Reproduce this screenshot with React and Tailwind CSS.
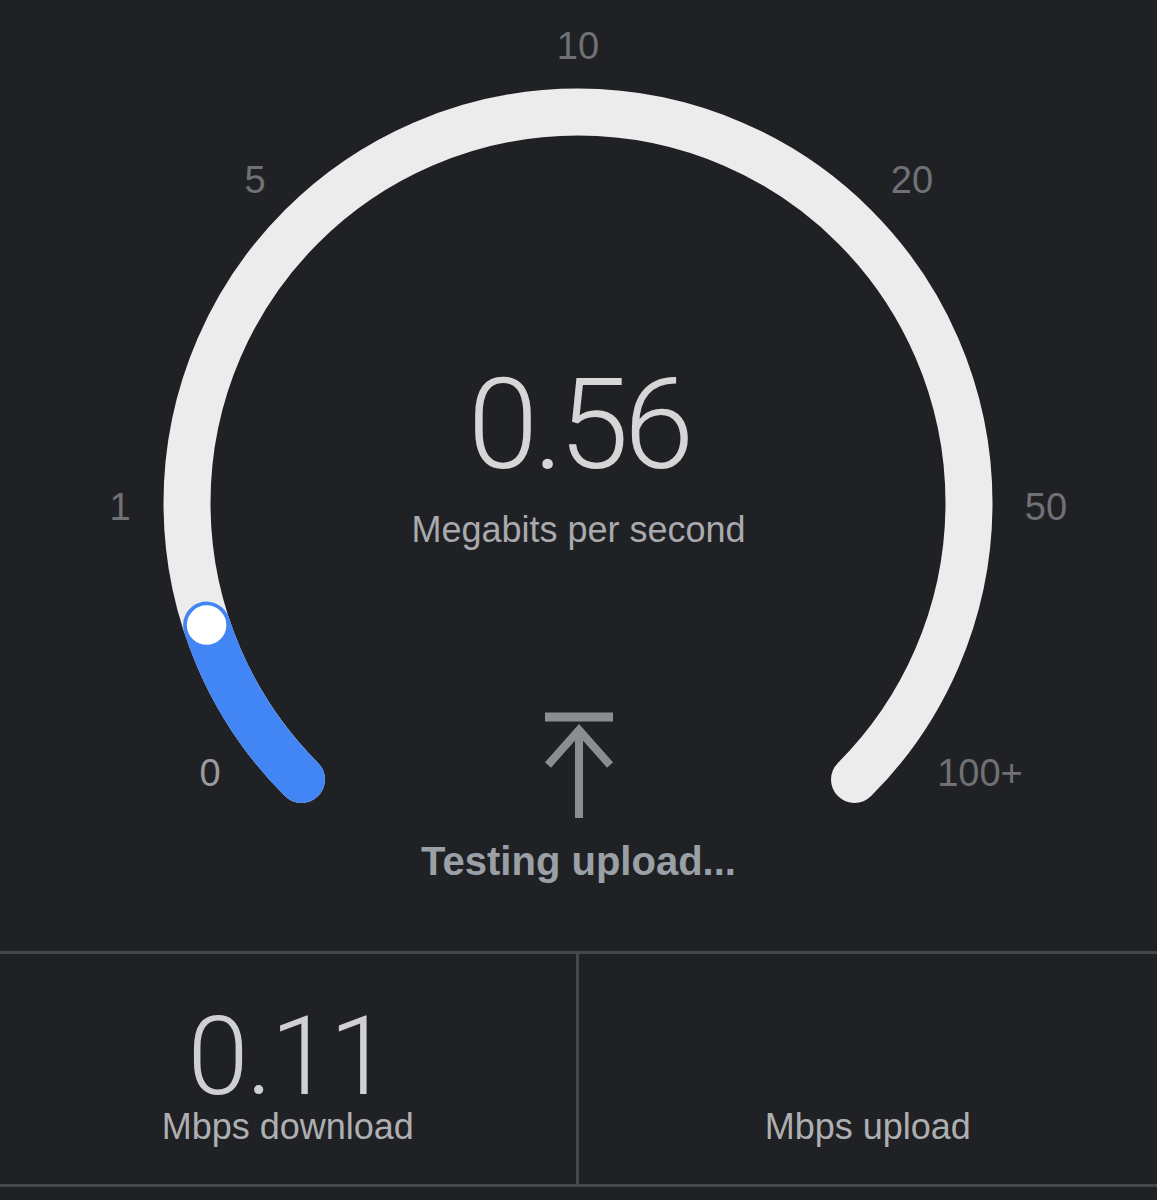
const labels = [
  { t: '0', x: 210, y: 773, c: '#9a9b9e' },
  { t: '1', x: 120, y: 507, c: '#707175' },
  { t: '5', x: 255, y: 180, c: '#707175' },
  { t: '10', x: 578, y: 46, c: '#707175' },
  { t: '20', x: 912, y: 180, c: '#707175' },
  { t: '50', x: 1046, y: 507, c: '#707175' },
  { t: '100+', x: 980, y: 773, c: '#707175' },
]

function Gauge() {
  return (
    <svg className="absolute inset-0" width="1157" height="951" viewBox="0 0 1157 951">
      <path d="M 301.5 779.5 A 391 391 0 1 1 854.5 779.5" fill="none" stroke="#ececec" strokeWidth="47" strokeLinecap="round" />
      <path d="M 301.5 779.5 A 391 391 0 0 1 206.6 625.1" fill="none" stroke="#4285f4" strokeWidth="47" strokeLinecap="round" />
      <circle cx="206.6" cy="625.1" r="21" fill="#ffffff" stroke="#4285f4" strokeWidth="2.5" />
      {labels.map(l => (
        <text key={l.t} x={l.x} y={l.y} fill={l.c} fontSize="38" fontFamily="'Liberation Sans', Arial, sans-serif" textAnchor="middle" dominantBaseline="central">{l.t}</text>
      ))}
    </svg>
  )
}

function UploadIcon() {
  return (
    <svg width="72" height="108" viewBox="0 0 72 108" fill="none" stroke="#8a8d91" strokeWidth="8">
      <path d="M 2 5 H 70" strokeWidth="9" />
      <path d="M 36 16 V 106" />
      <path d="M 5 53 L 36 18 L 67 53" />
    </svg>
  )
}

export default function App() {
  return (
    <div className="w-[1157px] h-[1200px] bg-[#202124] overflow-hidden" style={{ fontFamily: "'Liberation Sans', Arial, sans-serif" }}>
      <div className="relative h-[951px]">
        <Gauge />
        <div className="relative flex flex-col items-center pt-[361px]">
          <p className="text-[127px] leading-none font-light tracking-[-0.04em] text-[#d6d6d7] font-['Roboto',sans-serif]">0.56</p>
          <p className="mt-[24px] text-[36px] leading-none text-[#a9aaad]">Megabits per second</p>
          <div className="mt-[164px]">
            <UploadIcon />
          </div>
          <p className="mt-[21px] text-[40px] leading-none font-bold text-[#9aa0a6]">Testing upload...</p>
        </div>
      </div>
      <div className="grid grid-cols-2 h-[236px] border-y-[3px] border-[#46474a]">
        <div className="flex flex-col items-center justify-center border-r-[3px] border-[#46474a] pt-[8px]">
          <p className="text-[110px] leading-none font-light tracking-[-0.02em] text-[#cfd0d1] font-['Roboto',sans-serif]">0.11</p>
          <p className="mt-[-3px] text-[36px] leading-none text-[#aeafb1]">Mbps download</p>
        </div>
        <div className="flex flex-col items-center justify-center pt-[8px]">
          <p className="text-[110px] leading-none font-light text-[#cfd0d1] font-['Roboto',sans-serif] invisible">0</p>
          <p className="mt-[-3px] text-[36px] leading-none text-[#aeafb1]">Mbps upload</p>
        </div>
      </div>
    </div>
  )
}
